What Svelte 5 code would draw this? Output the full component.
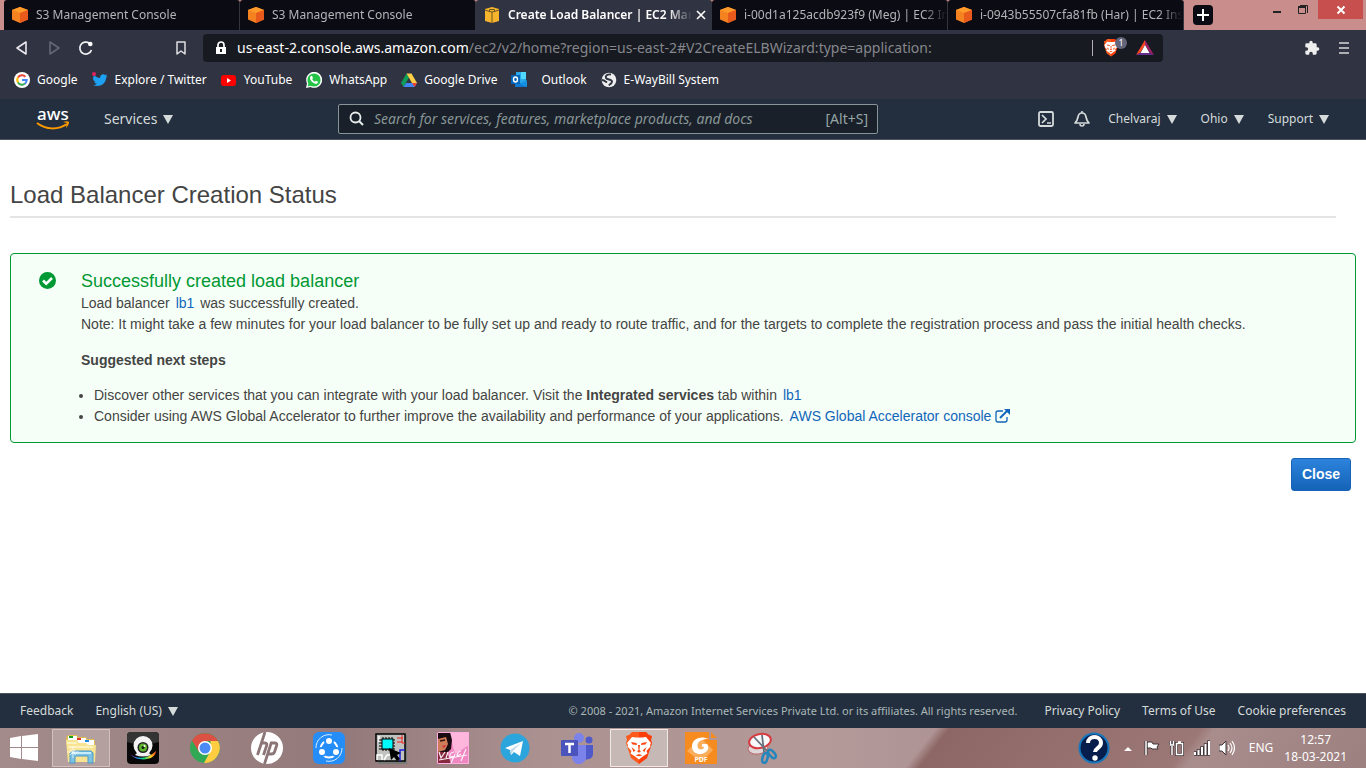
<script>
  const tabs = [
    { title: 'S3 Management Console', kind: 'orange' },
    { title: 'S3 Management Console', kind: 'orange' },
    { title: 'Create Load Balancer | EC2 Mana', kind: 'yellow', active: true },
    { title: 'i-00d1a125acdb923f9 (Meg) | EC2 Ins', kind: 'orange' },
    { title: 'i-0943b55507cfa81fb (Har) | EC2 Insta', kind: 'orange' }
  ];
  const bookmarks = ['Google', 'Explore / Twitter', 'YouTube', 'WhatsApp', 'Google Drive', 'Outlook', 'E-WayBill System'];
  const menus = ['Chelvaraj', 'Ohio', 'Support'];
  const apps = ['Explorer', 'Webcam', 'Chrome', 'HP', 'SHAREit', 'Circuit', 'Game', 'Telegram', 'Teams', 'Brave', 'PDF', 'Snipping'];
</script>

{#snippet caret()}
  <svg class="caret" width="10" height="9" viewBox="0 0 10 9" aria-hidden="true"><path d="M0 0h10L5 9z" fill="#d5dbdb" /></svg>
{/snippet}

{#snippet lion()}
  <path d="M9 0h14l3 3 3 1-1 4 1 3-5 15-8 6-8-6L3 11l1-3-1-4 3-1z" fill="#fb5a1c" />
  <path d="M16 0h7l3 3 3 1-1 4 1 3-5 15-8 6z" fill="#ff2b00" opacity=".6" />
  <path d="M9 5l4 .5h6l4-.5 5 6-1 2 .5 1.500-4 4.500 1 2.500-4 2.500-4.500 3.500-4.500-3.500-4-2.500 1-2.500-4-4.500L5 13l-1-2z" fill="#fff" />
  <path d="M8 10l5.500 1 .5 2-4.500-.5zM24 10l-5.500 1-.5 2 4.500-.5zM15 13h2l-.5 5 1.500 1.200-2 1.600-2-1.600 1.500-1.200zM8.500 15l4 3.500-2 1.500zM23.500 15l-4 3.500 2 1.500zM12.500 23.500l3.500-1.500 3.500 1.500-3.500.8z" fill="#fb4a18" />
{/snippet}

<div class="screen">
  <div class="tabstrip">
    <div class="tabs" role="tablist">
      {#each tabs as tab}
        <div class="tab" class:active={tab.active} role="tab" tabindex="0" aria-selected={!!tab.active}>
          <svg width="16" height="16" viewBox="0 0 16 16" aria-hidden="true">
            {#if tab.kind === 'orange'}
              <path d="M8 0l8 3v9.500L8 16 0 12.500V3z" fill="#f58220" />
              <path d="M8 0l8 3-8 3-8-3z" fill="#ff9b2a" />
              <path d="M16 3v9.500L8 16V6z" fill="#e8591c" />
            {:else}
              <path d="M1 2l7-2 7 2v12l-7 2-7-2z" fill="#f6b32c" />
              <path d="M1 3l4.500 1.500M15 3l-4.500 1.500M5.500 5V2.500h5V5M8 5v11M5.500 4.500L8 5l2.500-.5" stroke="#6d5720" fill="none" />
            {/if}
          </svg>
          <span class="tab-title">{tab.title}</span>
          {#if tab.active}
            <button class="tab-close" aria-label="Close tab"><svg width="10" height="10" viewBox="0 0 10 10"><path d="M1 1l8 8M9 1L1 9" stroke="#fff" stroke-width="1.600" /></svg></button>
          {/if}
        </div>
      {/each}
    </div>
    <button class="new-tab" aria-label="New tab"><svg width="20" height="20" viewBox="0 0 20 20"><path d="M10 4v12M4 10h12" stroke="#fff" stroke-width="2" /></svg></button>
    <div class="window-controls">
      <button aria-label="Minimize"><svg width="10" height="12" viewBox="0 0 10 12"><path d="M1 8h8" stroke="#222" stroke-width="2" /></svg></button>
      <button aria-label="Restore"><svg width="12" height="12" viewBox="0 0 12 12"><path d="M1.500 3.500h7v6h-7zM3 1.500h7.500V9" stroke="#222" fill="none" /><path d="M1 3h8" stroke="#222" stroke-width="2" /></svg></button>
      <button class="window-close" aria-label="Close window"><svg width="10" height="10" viewBox="0 0 10 10"><path d="M1.500 1.500l7 7M8.500 1.500l-7 7" stroke="#fff" stroke-width="2" /></svg></button>
    </div>
  </div>

  <div class="toolbar">
    <button aria-label="Back"><svg width="16" height="16" viewBox="0 0 16 16"><path d="M12 2v12L3 8z" fill="none" stroke="#e8e8ec" stroke-width="1.600" stroke-linejoin="round" /></svg></button>
    <button aria-label="Forward"><svg width="16" height="16" viewBox="0 0 16 16"><path d="M4 2v12l9-6z" fill="none" stroke="#656773" stroke-width="1.600" stroke-linejoin="round" /></svg></button>
    <button aria-label="Reload"><svg width="16" height="16" viewBox="0 0 16 16"><path d="M13.500 10A6 6 0 1 1 11.500 3.300" fill="none" stroke="#f0f0f2" stroke-width="1.700" /><circle cx="12.300" cy="4" r="2.300" fill="#fff" /></svg></button>
    <button class="save" aria-label="Bookmark this page"><svg width="16" height="16" viewBox="0 0 16 16"><path d="M4 2h8v12l-4-3-4 3z" fill="none" stroke="#dedee2" stroke-width="1.500" stroke-linejoin="round" /></svg></button>
    <div class="address">
      <svg width="12" height="14" viewBox="0 0 12 14" aria-hidden="true"><path d="M3 6V4a3 3 0 0 1 6 0v2" fill="none" stroke="#fff" stroke-width="1.700" /><path d="M1 6h10v7H1z" fill="#fff" /><path d="M5 8h2v3H5z" fill="#181a21" /></svg>
      <span class="url"><b>us-east-2.console.aws.amazon.com</b>/ec2/v2/home?region=us-east-2#V2CreateELBWizard:type=application:</span>
      <span class="address-line"></span>
      <button class="shield" aria-label="Brave Shields"><svg width="16" height="18" viewBox="2 0 28 33">{@render lion()}</svg><span class="count">1</span></button>
      <button aria-label="Brave Rewards"><svg width="18" height="16" viewBox="0 0 18 16"><path d="M9 0L0 15l4-2 5-8z" fill="#ff4724" /><path d="M9 0l9 15-4-2-5-8z" fill="#9e1f63" /><path d="M0 15h18l-4-2H4z" fill="#662d91" /><path d="M9 5l4.500 8h-9z" fill="#fff" /></svg></button>
    </div>
    <button class="extensions" aria-label="Extensions"><svg width="16" height="16" viewBox="0 0 24 24"><path d="M20.500 11H19V7a2 2 0 0 0-2-2h-4V3.500a2.500 2.500 0 0 0-5 0V5H4a2 2 0 0 0-2 2v3.800h1.500a2.700 2.700 0 0 1 0 5.400H2V20a2 2 0 0 0 2 2h3.800v-1.500a2.700 2.700 0 0 1 5.400 0V22H17a2 2 0 0 0 2-2v-4h1.500a2.500 2.500 0 0 0 0-5z" fill="#eee" /></svg></button>
    <button aria-label="Menu"><svg width="12" height="12" viewBox="0 0 12 12"><path d="M1 1h10M1 6h10M1 11h10" stroke="#d8d8dc" stroke-width="1.500" /></svg></button>
  </div>

  <nav class="bookmarks" aria-label="Bookmarks">
    {#each bookmarks as name}
      <a href="#bookmark" class:wide={name === 'Outlook'}>
        <svg width="16" height="16" viewBox="0 0 16 16" aria-hidden="true">
          {#if name === 'Google'}
            <circle cx="8" cy="8" r="8" fill="#fff" />
            <g fill="none" stroke-width="2"><path d="M4 5.500A4.700 4.700 0 0 1 11.400 4.700" stroke="#ea4335" /><path d="M4.200 10.700A4.700 4.700 0 0 1 4 5.400" stroke="#fbbc05" /><path d="M11 11.600A4.700 4.700 0 0 1 4 10.500" stroke="#34a853" /><path d="M8 8h4.700a4.700 4.700 0 0 1-1.700 3.700" stroke="#4285f4" /></g>
          {:else if name === 'Explore / Twitter'}
            <path d="M2 3c2 2 4 3 6 3 0-3 3-5 5-3l2-.5-1 2 1.500-.2L14 6c0 6-7 10-13 7 2 0 3-.5 4-1.300-1.500 0-2.300-1-2.700-2h1C2 9 1 8 1 6.500z" fill="#1da1f2" /><circle cx="2" cy="2" r="2" fill="#e0245e" />
          {:else if name === 'YouTube'}
            <rect x="0" y="3" width="15" height="11" rx="3" fill="#f00" /><path d="M6 6v5l4-2.500z" fill="#fff" />
          {:else if name === 'WhatsApp'}
            <path d="M0 16l1-4.500A8 8 0 1 1 4.500 15z" fill="#fff" /><circle cx="8" cy="8" r="6.600" fill="#25c447" /><path d="M1.600 14.500l1-4 3 3z" fill="#25c447" /><path d="M5 4l1-.2 1 2.200-.8 1.200c.7 1.200 1.600 2 2.800 2.500l1-1 2 1c0 2-2 2.500-3.500 1.800C6 10.300 4.500 8.500 4 6.500c0-1 .3-2 1-2.500z" fill="#fff" />
          {:else if name === 'Google Drive'}
            <path d="M5.500 1.500L0 11l2.500 4L8 5.500z" fill="#0f9d58" /><path d="M5.500 1.500h5L16 11h-5z" fill="#ffcf48" /><path d="M5 11h11l-2.500 4h-11z" fill="#4285f4" /><path d="M11 11h5l-2.500 4z" fill="#ea4335" />
          {:else if name === 'Outlook'}
            <path d="M5 0h10v15H5z" fill="#28a8ea" /><path d="M10 0h5v7h-5z" fill="#50d9ff" /><path d="M4 15V8l12 7z" fill="#0f78d4" /><path d="M16 8v7L9 12z" fill="#1490df" /><rect y="3" width="9" height="9" fill="#0364b8" /><ellipse cx="4.500" cy="7.500" rx="2" ry="2.500" fill="none" stroke="#fff" stroke-width="1.400" />
          {:else}
            <circle cx="8" cy="8" r="7.300" fill="#eee" /><path d="M10 2.500C6 2 4 4 5 6s6 1 6 3.500-2 2-3 4M1 8c2 0 3 1 5 2.500" fill="none" stroke="#303341" stroke-width="1.900" />
          {/if}
        </svg>
        <span>{name}</span>
      </a>
    {/each}
  </nav>

  <header class="aws-nav">
    <div class="nav-left">
      <a href="#home" class="logo" aria-label="AWS home">
        <svg width="34" height="24" viewBox="0 0 34 24"><text x="1" y="13" font-size="17" font-weight="500" fill="#fff">aws</text><path d="M1 16c9 7 21 7 30 1" fill="none" stroke="#ff9900" stroke-width="2" /><path d="M27 15c3-1 5-1 6 0 0 2-1 4-3 6l1-5z" fill="#ff9900" /></svg>
      </a>
      <button class="services">Services {@render caret()}</button>
    </div>
    <label class="search">
      <svg width="16" height="16" viewBox="0 0 16 16" aria-hidden="true"><circle cx="6.500" cy="6.500" r="5" fill="none" stroke="#eaeded" stroke-width="1.800" /><path d="M10 10l4 4" stroke="#eaeded" stroke-width="2" /></svg>
      <input type="text" aria-label="Search" placeholder="Search for services, features, marketplace products, and docs" />
      <span>[Alt+S]</span>
    </label>
    <div class="nav-right">
      <button aria-label="CloudShell"><svg width="16" height="16" viewBox="0 0 16 16"><rect x="1" y="1" width="14" height="14" rx="1.500" fill="none" stroke="#d5dbdb" stroke-width="1.800" /><path d="M4 4l4 4-4 4M9 12h4" fill="none" stroke="#d5dbdb" stroke-width="1.700" /></svg></button>
      <button class="bell" aria-label="Notifications"><svg width="16" height="16" viewBox="0 0 16 16"><path d="M1 12c2-2 2.500-3 3-6 .3-2 1.500-4 4-4s3.700 2 4 4c.5 3 1 4 3 6z" fill="none" stroke="#d5dbdb" stroke-width="1.700" stroke-linejoin="round" /><path d="M6 13a2 2 0 0 0 4 0M8 0v2" fill="none" stroke="#d5dbdb" stroke-width="1.600" /></svg></button>
      {#each menus as menu}
        <button class="menu">{menu} {@render caret()}</button>
      {/each}
    </div>
  </header>

  <main>
    <h1>Load Balancer Creation Status</h1>
    <section class="notice">
      <svg class="check" width="17" height="17" viewBox="0 0 17 17" aria-hidden="true"><circle cx="8.500" cy="8.500" r="8.500" fill="#093" /><path d="M4 8.500l3.200 3.200L13 6" fill="none" stroke="#fff" stroke-width="2.600" /></svg>
      <div>
        <h2>Successfully created load balancer</h2>
        <p>Load balancer <a class="spaced" href="#lb1">lb1</a> was successfully created.</p>
        <p>Note: It might take a few minutes for your load balancer to be fully set up and ready to route traffic, and for the targets to complete the registration process and pass the initial health checks.</p>
        <h3>Suggested next steps</h3>
        <ul>
          <li>Discover other services that you can integrate with your load balancer. Visit the <b>Integrated services</b> tab within <a class="spaced" href="#lb1">lb1</a></li>
          <li>Consider using AWS Global Accelerator to further improve the availability and performance of your applications. <a class="spaced" href="#accelerator">AWS Global Accelerator console <svg width="15" height="14" viewBox="0 0 15 14" aria-hidden="true"><path d="M8 2H3a2 2 0 0 0-2 2v7a2 2 0 0 0 2 2h7a2 2 0 0 0 2-2V8" fill="none" stroke="#1166bb" stroke-width="1.300" /><path d="M5 9l7-7" stroke="#1166bb" stroke-width="2" /><path d="M9 0h6v6z" fill="#1166bb" /></svg></a></li>
        </ul>
      </div>
    </section>
    <div class="actions"><button class="close">Close</button></div>
  </main>

  <footer>
    <a href="#feedback">Feedback</a>
    <button>English (US) {@render caret()}</button>
    <small>© 2008 - 2021, Amazon Internet Services Private Ltd. or its affiliates. All rights reserved.</small>
    <a href="#privacy">Privacy Policy</a>
    <a href="#terms">Terms of Use</a>
    <a href="#cookies">Cookie preferences</a>
  </footer>

  <div class="taskbar">
    <button class="start" aria-label="Start"><svg width="28" height="28" viewBox="0 0 28 28"><path d="M0 4l11-2v11H0zM12 2l16-2v13H12zM0 14h11v11L0 23zM12 14h16v13l-16-2z" fill="#fff" /></svg></button>
    {#each apps as app}
      <button class="app" class:open={app === 'Explorer'} class:current={app === 'Brave'} aria-label={app}>
        <svg width="32" height="32" viewBox="0 0 32 32">
          {#if app === 'Explorer'}
            <path d="M1 6l2-3h9l1 2h8l1 2h7l1 3v18H3z" fill="#dfbd50" /><path d="M3 4h9v5H3zM11 6h10v5H11zM19 8h10v5H19z" fill="#fff" /><path d="M4 4h4v2H4z" fill="#18a01d" /><path d="M12 6h4v2h-4z" fill="#e03524" /><path d="M20 8h4v2h-4z" fill="#2088df" /><path d="M1 8h11l2 3h7l2 2h8l-1 17H3z" fill="#f8e392" /><path d="M2 11h10M3 15h25" stroke="#fdf3c0" stroke-width="2" /><path d="M5 31V21l3-2h18l2 2v10h-5v-7H10v7z" fill="#7cc2e2" stroke="#4d9bc8" /><path d="M7 21h19" stroke="#c9ecfa" stroke-width="2" /><path d="M8 14v12M2 20h12M5 17l6 6M11 17l-6 6" stroke="#fff" stroke-width="1" opacity=".7" />
          {:else if app === 'Webcam'}
            <defs><linearGradient id="rainbow"><stop offset="0" stop-color="#d32ad9" /><stop offset=".3" stop-color="#169aff" /><stop offset=".55" stop-color="#18e26d" /><stop offset=".8" stop-color="#ffd622" /><stop offset="1" stop-color="#ff3a20" /></linearGradient></defs>
            <rect width="32" height="32" rx="4" fill="#080808" /><path d="M0 4a4 4 0 0 1 4-4h24a4 4 0 0 1 4 4v6Q16 15 0 10z" fill="#343434" /><path d="M3 22c7 6 18 5 26-3 0 9-18 12-26 3z" fill="url(#rainbow)" /><path d="M10 21h12l2 2q-8 3-16 0z" fill="#eee" /><circle cx="16" cy="13.500" r="9.500" fill="#f4f4f4" /><circle cx="16" cy="15.500" r="5.500" fill="#222" /><circle cx="16" cy="15.500" r="4" fill="#60b32c" /><circle cx="16" cy="15.500" r="1.500" fill="#102010" /><circle cx="17.500" cy="14" r="1" fill="#fff" />
          {:else if app === 'Chrome'}
            <circle cx="16" cy="16" r="15" fill="#31a853" /><path d="M29 9a15 15 0 0 1-14 22l6.500-12V9z" fill="#ffcd42" /><path d="M3 8.500L10 20l6-11h13A15 15 0 0 0 3 8.500z" fill="#dd5144" /><circle cx="16" cy="16" r="7" fill="#fff" /><circle cx="16" cy="16" r="5.500" fill="#4b8af4" />
          {:else if app === 'HP'}
            <circle cx="16" cy="16" r="16" fill="#fff" /><g fill="none" stroke="#8b7577" stroke-width="2.800"><path d="M14 0L6.500 23M10 11h4q2.500 0 1.500 3l-3 9M20.500 10l-7 22M20 11h4q2.500 0 1.500 3l-2 6q-.7 2-3 2h-3" /></g>
          {:else if app === 'SHAREit'}
            <rect width="32" height="32" rx="6" fill="#258df7" /><circle cx="16" cy="17" r="8.500" fill="none" stroke="#fff" stroke-width="2" /><g fill="#fff" stroke="#258df7" stroke-width="2"><circle cx="16" cy="9" r="4" /><circle cx="9" cy="20" r="4" /><circle cx="23" cy="20" r="4" /></g><path d="M3 16A13 13 0 0 1 19 3M29 16A13 13 0 0 1 13 29" stroke="#d6ecff" fill="none" />
          {:else if app === 'Circuit'}
            <rect x="3" y="3" width="29" height="29" fill="#777b78" /><rect x="1" y="2" width="29" height="27" fill="#bfc2bf" stroke="#000" stroke-width="1.500" /><path d="M2 28V23h5v5M9 28l3-5h3M4 10V4" stroke="#fff" stroke-width="1.500" fill="none" /><path d="M22 6h6M27 3v8h3M22 10h5" stroke="#f02020" fill="none" /><path d="M30 18h-5v11" stroke="#2020e0" stroke-width="1.500" fill="none" /><path d="M8 5v14M11 5v14M14 5v14M17 5v14M4 8h16M4 11h16M4 14h16M4 17h16" stroke="#000" /><rect x="7" y="7" width="11" height="10" fill="#00fafa" stroke="#000" /><path d="M14 16l2 12 3-3 3 4 3-2-3-4 4-2z" fill="#000" />
          {:else if app === 'Game'}
            <path d="M0 0h32v32H0z" fill="#ef87c1" /><path d="M12 0h20v13L18 22z" fill="#ffb6dd" /><path d="M0 0h13l2 8-1 9-4 4H0z" fill="#1b0c12" /><path d="M1 7l8-2 2 7-3 6-7 2z" fill="#cf7d58" /><path d="M3 9l5-1" stroke="#35100c" stroke-width="1.500" /><path d="M5 14l4-1-2 3z" fill="#d8283c" /><path d="M0 20h10l4 12H0z" fill="#87283e" /><path d="M2 20l2 6 4-6M11 20l-2 6M17 20q-5 1-4 5l5-1M24 19q-4 1-4 5l4-2M29 17l-5 12M2 28l28-5M18 22l-4 9" fill="none" stroke="#fff0fa" stroke-width="1.200" /><path d="M.500 .500h31v31H.500z" fill="none" stroke="#ffaee0" />
          {:else if app === 'Telegram'}
            <circle cx="16" cy="16" r="14.500" fill="#2ca5dc" /><path d="M6 16l18-7-3 15-6-4-3 3-1-5z" fill="#fff" /><path d="M11 18l11-7-8 8-2 4z" fill="#bfd9e8" />
          {:else if app === 'Teams'}
            <circle cx="18" cy="6" r="5" fill="#7b83eb" /><circle cx="28" cy="8" r="3.500" fill="#5059c9" /><path d="M22 13h10v9a6 6 0 0 1-10 4z" fill="#5059c9" /><path d="M12 13h13v11a7 7 0 0 1-14 2z" fill="#7b83eb" /><rect y="8" width="17" height="16" rx="1" fill="#4b53bc" /><path d="M4 12h9M8.500 12v9" stroke="#fff" stroke-width="2.500" />
          {:else if app === 'Brave'}
            {@render lion()}
          {:else if app === 'PDF'}
            <path d="M0 0h24v8h8v24H0z" fill="#f68b1f" /><path d="M26 0l6 6h-6z" fill="#f68b1f" /><path d="M16 6l12 12-12 12L2 19z" fill="#faae5b" /><path d="M24 7C15 3 7 7 7 14.500c0 8 10 10 15 4.500 2-2 1.500-5 0-7h-5v2.500l2 .5c0 3-6 3.500-6.500-.5C12 9 17 7 24 7z" fill="#fff" /><text x="16" y="30" text-anchor="middle" font-size="7" font-weight="600" fill="#fff">PDF</text>
          {:else}
            <ellipse cx="11" cy="16" rx="10" ry="6" fill="#ded6d7" stroke="#ba6b6e" transform="rotate(-8 11 16)" /><ellipse cx="13" cy="9" rx="11" ry="7" fill="#f8f8fa" stroke="#d63b40" stroke-width="2" transform="rotate(-12 13 9)" /><path d="M7 5l13 14M15 3l2 17" stroke="#65717b" stroke-width="1.800" /><ellipse cx="18" cy="26" rx="2.500" ry="5" fill="none" stroke="#2386bd" stroke-width="2.500" transform="rotate(15 18 26)" /><ellipse cx="25" cy="22" rx="2.500" ry="5" fill="none" stroke="#2386bd" stroke-width="2.500" transform="rotate(-40 25 22)" />
          {/if}
        </svg>
      </button>
    {/each}
    <div class="tray">
      <button aria-label="Help"><svg width="32" height="32" viewBox="0 0 32 32"><circle cx="16" cy="16" r="14.500" fill="#071d4b" stroke="#1677bd" stroke-width="2" /><path d="M10 11c0-8 13-8 13 0 0 5-6 5-6 9" fill="none" stroke="#fff" stroke-width="4" /><circle cx="17" cy="26" r="2.700" fill="#fff" /></svg></button>
      <button class="more" aria-label="Show hidden icons"><svg width="8" height="5" viewBox="0 0 8 5"><path d="M0 5l4-4 4 4z" fill="#fff" /></svg></button>
      <svg width="16" height="16" viewBox="0 0 16 16" aria-hidden="true"><path d="M3 2h5l1 2h6l-2 3 1 2H8L7 8H3z" fill="#fff" stroke="#40363a" /><path d="M2 1v14" stroke="#40363a" stroke-width="3" /><path d="M2 1v14" stroke="#fff" stroke-width="1.500" /></svg>
      <svg width="16" height="16" viewBox="0 0 16 16" aria-hidden="true"><g fill="none" stroke="#40363a" stroke-width="3"><path d="M7.500 3.500h6v11h-6zM3 6v9M1 5h4M1.500 1v4M4.500 1v4" /></g><g fill="none" stroke="#fff" stroke-width="1.500"><path d="M7.500 3.500h6v11h-6zM3 6v9M1 5h4M1.500 1v4M4.500 1v4M9 2h3" /></g></svg>
      <svg width="16" height="16" viewBox="0 0 16 16" aria-hidden="true"><path d="M0 12h2v3H0zM3.500 10h2v5h-2zM7 7h2v8H7zM10.500 4h2v11h-2zM14 1h2v14h-2z" fill="#fff" stroke="#40363a" stroke-width="1.500" paint-order="stroke" /></svg>
      <svg width="16" height="16" viewBox="0 0 16 16" aria-hidden="true"><path d="M0 5h3l4-4v14l-4-4H0z" fill="#fff" stroke="#40363a" /><path d="M9 5q2 3 0 6M11 3q4 5 0 10M13 1q5 7 0 14" fill="none" stroke="#fff" stroke-width="1.200" /></svg>
      <span class="lang">ENG</span>
      <time>12:57<br />18-03-2021</time>
    </div>
  </div>
</div>

<style>
  :global(body) { margin: 0; }
  .screen { min-height: 100vh; display: flex; flex-direction: column; background: #fff; font: 12px/16px "Noto Sans", sans-serif; }
  button { border: 0; padding: 0; background: none; font: inherit; color: inherit; display: flex; align-items: center; justify-content: center; }
  a { text-decoration: none; color: inherit; }
  svg { flex: none; }

  .tabstrip { display: flex; height: 30px; background: #c98d8b; padding-left: 4px; }
  .tabs { display: grid; grid-template-columns: repeat(5, minmax(0, 1fr)); flex: 0 1 1180px; min-width: 0; }
  .tab { min-width: 0; box-sizing: border-box; display: flex; align-items: center; gap: 8px; padding: 0 0 0 8px; background: #0b0b14; color: #b4b4b8; border-radius: 3px 3px 0 0; border-right: 1px solid #33343c; }
  .tab.active { background: #303341; color: #fff; font-weight: 600; padding-right: 5px; }
  .tab-title { flex: 1; min-width: 0; overflow: hidden; white-space: nowrap; mask-image: linear-gradient(90deg, #000 calc(100% - 24px), transparent); }
  .active .tab-title { margin-right: -4px; }
  .new-tab { align-self: center; margin-left: 9px; background: #0b0b14; border-radius: 4px; }
  .window-controls { margin-left: auto; display: flex; align-items: flex-start; }
  .window-controls button { width: 26px; height: 19px; }
  .window-controls .window-close { width: 45px; margin: 0 3px 0 2px; background: #c7504f; }

  .toolbar { display: flex; align-items: center; height: 36px; background: #303341; padding: 0 16px 0 14px; gap: 16px; }
  .toolbar .save { margin-left: 63px; }
  .address { flex: 1; min-width: 0; display: flex; align-items: center; height: 28px; margin: 0 125px 0 -2px; padding: 0 9px 0 12px; gap: 10px; border-radius: 4px; background: #181a21; }
  .url { flex: 1; min-width: 0; overflow: hidden; white-space: nowrap; font-size: 14px; line-height: 20px; color: #85878d; }
  .url b { font-weight: 400; color: #fff; }
  .address-line { width: 1px; height: 16px; background: #b0b0b4; }
  .shield { position: relative; margin-right: 7px; }
  .count { position: absolute; left: 12px; top: -2px; width: 12px; height: 12px; border-radius: 6px; background: #63657a; color: #fff; font-size: 9px; line-height: 12px; }
  .extensions { margin-right: 2px; }

  .bookmarks { display: flex; align-items: center; height: 28px; padding: 0 14px 5px; gap: 14px; background: #303341; color: #fff; }
  .bookmarks a { display: flex; align-items: center; gap: 7px; white-space: nowrap; }
  .bookmarks .wide { gap: 14px; }

  .aws-nav { display: flex; align-items: center; justify-content: space-between; height: 40px; padding: 0 37px 0 36px; background: #232f3e; border-bottom: 1px solid #4b535c; color: #d5dbdb; }
  .nav-left { display: flex; align-items: center; gap: 34px; flex: 0 1 302px; }
  .logo { display: flex; }
  .services { gap: 6px; font-size: 14px; line-height: 20px; }
  .search { box-sizing: border-box; flex: 0 1 540px; height: 30px; display: flex; align-items: center; gap: 9px; padding: 0 9px 0 10px; border: 1px solid #879596; border-radius: 2px; background: #1a2029; color: #95a5a6; font-size: 14px; }
  .search input { flex: 1; min-width: 0; border: 0; padding: 0; background: none; outline: 0; color: #fff; font: italic 14px/20px "Noto Sans", sans-serif; }
  .search input::placeholder { color: #879596; opacity: 1; }
  .nav-right { display: flex; align-items: center; margin-left: auto; gap: 20px; }
  .nav-right .bell { margin-right: -2px; }
  .menu { gap: 6px; }
  .menu + .menu { margin-left: 4px; }

  main { flex: 1; padding: 40px 10px 0; font: 14px/21px "Liberation Sans", Arial, sans-serif; color: #444; }
  h1 { margin: 0 20px 0 0; padding-bottom: 6px; border-bottom: 2px solid #e4e4e4; font-size: 24px; line-height: 30px; font-weight: 400; }
  .notice { display: flex; margin-top: 35px; padding: 16px 27px 15px 28px; border: 1px solid #093; border-radius: 4px; background: #f6fff7; }
  .check { margin: 2px 25px 0 0; }
  h2 { margin: 0; font-size: 18px; line-height: 23px; font-weight: 400; color: #093; }
  p { margin: 0; }
  h3 { margin: 15px 0 14px; font-size: 14px; line-height: 21px; }
  ul { margin: 0; padding-left: 13px; }
  .notice a { color: #1166bb; }
  .spaced { margin: 0 2px; }
  .spaced svg { vertical-align: -2px; }
  .actions { display: flex; justify-content: flex-end; padding: 15px 5px; }
  .close { height: 33px; padding: 0 10px; border: 1px solid #1763b5; border-radius: 3px; background: linear-gradient(#2d83dc, #1463b8); color: #fff; font-size: 14px; font-weight: 700; }

  footer { display: flex; align-items: center; gap: 22px; height: 34px; padding: 0 20px; border-top: 1px solid #4b535c; background: #232f3e; color: #d5dbdb; }
  footer button { gap: 6px; }
  footer small { margin-left: auto; font-size: 11px; color: #aab7b8; margin-right: 5px; }

  .taskbar { display: flex; align-items: center; height: 40px; gap: 4px; background: linear-gradient(128deg, transparent 67%, #8d6765 68%, #9b7775 86%, #a98c8c 87%, #9c7f7f), linear-gradient(90deg, #a38a8b, #93797a 25%, #ac9191 40%, #b59a9a 60%, #967c7d); color: #fff; }
  .start { width: 48px; }
  .app { box-sizing: border-box; width: 58px; height: 38px; border: 1px solid transparent; }
  .open { background: #b4a19f; border-color: #cfc1c0; }
  .current { background: #c5b8b5; border-color: #f0e9e7; }
  .tray { margin-left: auto; display: flex; align-items: center; gap: 9px; padding-right: 19px; }
  .more { margin: 0 3px 0 5px; }
  .lang { margin-left: 5px; }
  time { margin-left: 2px; text-align: center; line-height: 17px; }
</style>
